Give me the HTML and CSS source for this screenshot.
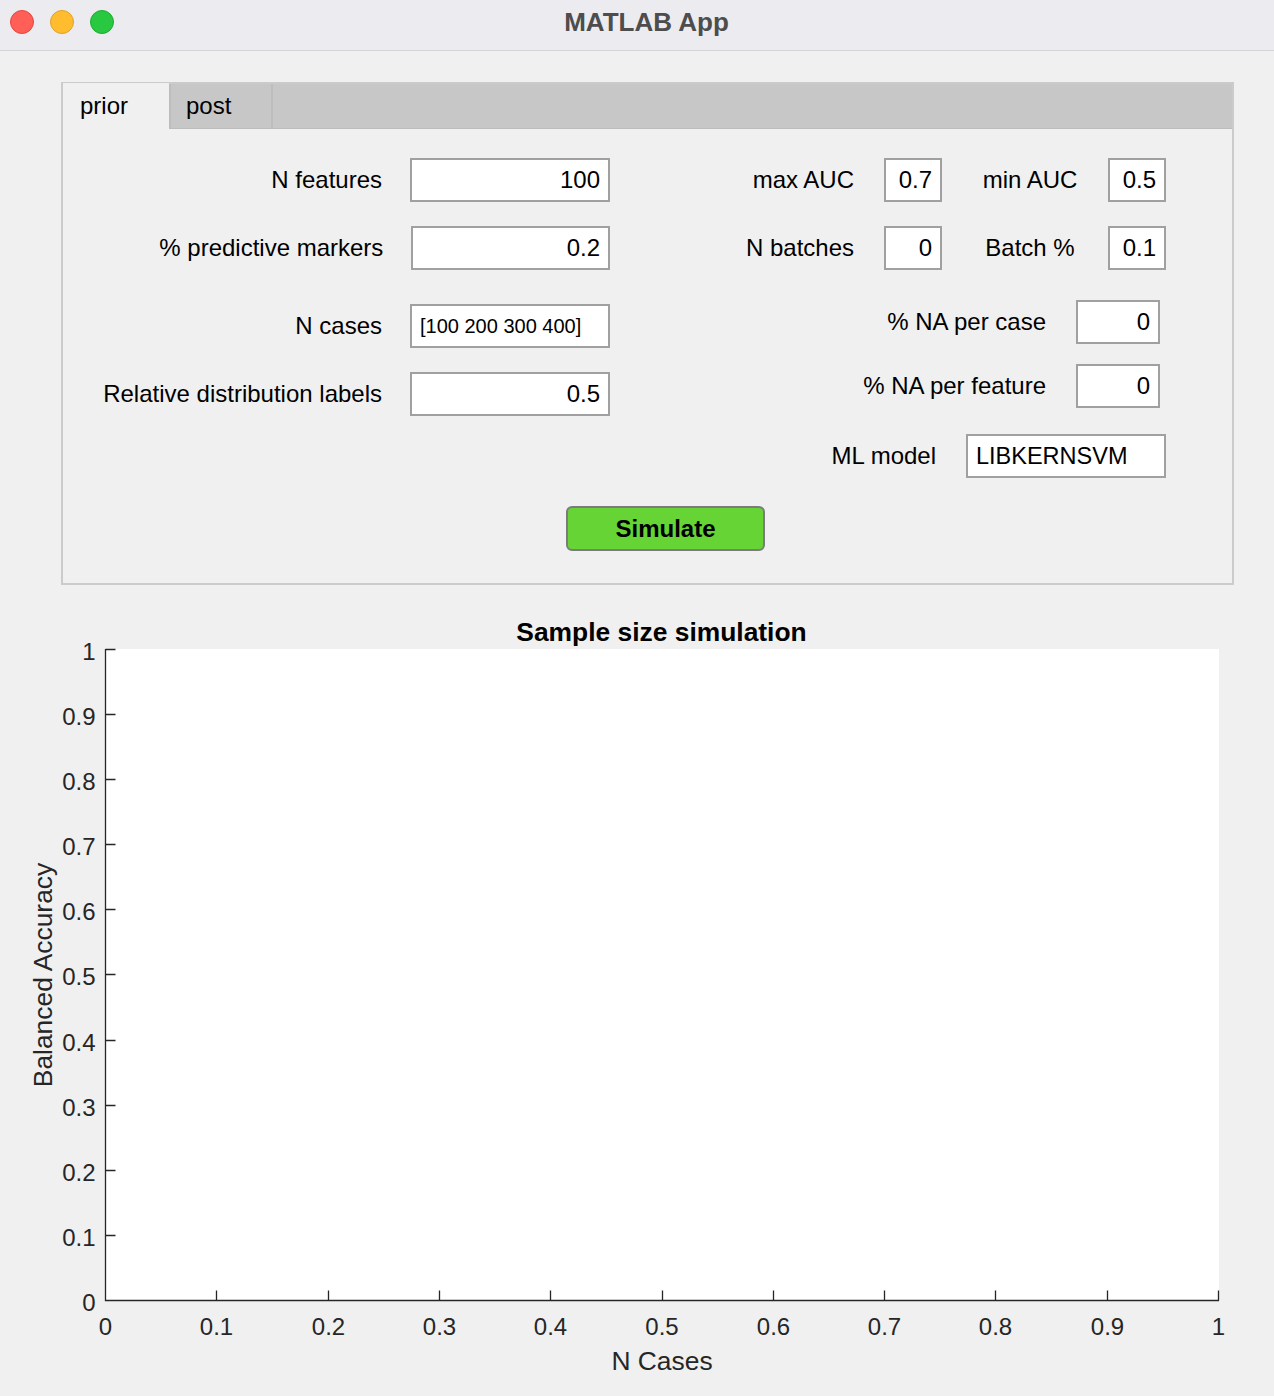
FILE: index.html
```html
<!DOCTYPE html>
<html lang="en">
<head>
<meta charset="utf-8">
<title>MATLAB App</title>
<link rel="stylesheet" href="styles.css">
</head>
<body>
<div class="window">
  <header class="titlebar">
    <div class="lights">
      <span class="light light-close"></span>
      <span class="light light-min"></span>
      <span class="light light-max"></span>
    </div>
    <div class="title">MATLAB App</div>
    <div class="titlebar-spacer"></div>
  </header>

  <main class="content">
    <section class="tabgroup">
      <nav class="tabbar">
        <div class="tab tab-active">prior</div>
        <div class="tab tab-inactive">post</div>
      </nav>
      <div class="tabbody">
        <div class="form">
          <div class="col col-left">
            <div class="field">
              <span class="lbl lbl-left">N features</span>
              <div class="edit w200 num">100</div>
            </div>
            <div class="field field-shift mt24">
              <span class="lbl lbl-left">% predictive markers</span>
              <div class="edit w199 num">0.2</div>
            </div>
            <div class="field mt34">
              <span class="lbl lbl-left">N cases</span>
              <div class="edit w200 txt small">[100 200 300 400]</div>
            </div>
            <div class="field mt24">
              <span class="lbl lbl-left">Relative distribution labels</span>
              <div class="edit w200 num">0.5</div>
            </div>
          </div>

          <div class="col col-right">
            <div class="field">
              <span class="lbl lbl-auc">max AUC</span>
              <div class="edit w58 num">0.7</div>
              <span class="lbl lbl-mid">min AUC</span>
              <div class="edit w58 num">0.5</div>
            </div>
            <div class="field mt24">
              <span class="lbl lbl-auc">N batches</span>
              <div class="edit w58 num">0</div>
              <span class="lbl lbl-mid">Batch %</span>
              <div class="edit w58 num">0.1</div>
            </div>
            <div class="field mt30">
              <span class="lbl lbl-na">% NA per case</span>
              <div class="edit w84 num">0</div>
            </div>
            <div class="field mt20">
              <span class="lbl lbl-na">% NA per feature</span>
              <div class="edit w84 num">0</div>
            </div>
            <div class="field mt26">
              <span class="lbl lbl-ml">ML model</span>
              <div class="edit w200 txt model">LIBKERNSVM</div>
            </div>
          </div>
        </div>

        <div class="button-row">
          <button class="btn-simulate" type="button">Simulate</button>
        </div>
      </div>
    </section>

    <svg class="chart" viewBox="0 0 1274 811" width="1274" height="811">
      <text class="chart-title" x="661.5" y="56" text-anchor="middle">Sample size simulation</text>
      <rect class="plot-bg" x="105.5" y="64" width="1113.5" height="651.5"/>
      <path class="tick" d="M105.5 64.5h10M105.5 129.5h10M105.5 194.5h10M105.5 259.5h10M105.5 324.5h10M105.5 389.5h10M105.5 455.5h10M105.5 520.5h10M105.5 585.5h10M105.5 650.5h10"/>
      <path class="tick" d="M216.5 715.5v-10M328.5 715.5v-10M439.5 715.5v-10M550.5 715.5v-10M662.5 715.5v-10M773.5 715.5v-10M884.5 715.5v-10M995.5 715.5v-10M1107.5 715.5v-10M1218.5 715.5v-10"/>
      <path class="axis" d="M105.5 64V715.5H1219"/>

      <g class="ylabels">
        <text class="tick-label" x="95.5" y="74.5" text-anchor="end">1</text>
        <text class="tick-label" x="95.5" y="139.5" text-anchor="end">0.9</text>
        <text class="tick-label" x="95.5" y="204.5" text-anchor="end">0.8</text>
        <text class="tick-label" x="95.5" y="269.5" text-anchor="end">0.7</text>
        <text class="tick-label" x="95.5" y="334.5" text-anchor="end">0.6</text>
        <text class="tick-label" x="95.5" y="399.5" text-anchor="end">0.5</text>
        <text class="tick-label" x="95.5" y="465.5" text-anchor="end">0.4</text>
        <text class="tick-label" x="95.5" y="530.5" text-anchor="end">0.3</text>
        <text class="tick-label" x="95.5" y="595.5" text-anchor="end">0.2</text>
        <text class="tick-label" x="95.5" y="660.5" text-anchor="end">0.1</text>
        <text class="tick-label" x="95.5" y="725.5" text-anchor="end">0</text>
      </g>

      <g class="xlabels">
        <text class="tick-label" x="105.5" y="750" text-anchor="middle">0</text>
        <text class="tick-label" x="216.5" y="750" text-anchor="middle">0.1</text>
        <text class="tick-label" x="328.5" y="750" text-anchor="middle">0.2</text>
        <text class="tick-label" x="439.5" y="750" text-anchor="middle">0.3</text>
        <text class="tick-label" x="550.5" y="750" text-anchor="middle">0.4</text>
        <text class="tick-label" x="662" y="750" text-anchor="middle">0.5</text>
        <text class="tick-label" x="773.5" y="750" text-anchor="middle">0.6</text>
        <text class="tick-label" x="884.5" y="750" text-anchor="middle">0.7</text>
        <text class="tick-label" x="995.5" y="750" text-anchor="middle">0.8</text>
        <text class="tick-label" x="1107.5" y="750" text-anchor="middle">0.9</text>
        <text class="tick-label" x="1218.5" y="750" text-anchor="middle">1</text>
      </g>

      <text class="axis-label" x="662" y="784.5" text-anchor="middle">N Cases</text>
      <text class="axis-label" transform="translate(52 390) rotate(-90)" text-anchor="middle">Balanced Accuracy</text>
    </svg>
  </main>
</div>
</body>
</html>
```

FILE: styles.css
```css
* {
  box-sizing: border-box;
}

html, body {
  margin: 0;
  padding: 0;
}

body {
  background: #f0f0f0;
  font-family: "Liberation Sans", Arial, Helvetica, sans-serif;
  color: #000;
  width: 1274px;
  height: 1396px;
  overflow: hidden;
}

.window {
  width: 1274px;
  height: 1396px;
  background: #f0f0f0;
}

/* ---------- title bar ---------- */
.titlebar {
  height: 51px;
  background: #ecebf0;
  border-bottom: 1px solid #d3d3d5;
  display: grid;
  grid-template-columns: 1fr auto 1fr;
  align-items: start;
}

.lights {
  display: flex;
  gap: 16px;
  padding: 10px 0 0 10px;
}

.light {
  width: 24px;
  height: 24px;
  border-radius: 50%;
  display: block;
}

.light-close {
  background: #ff5f57;
  border: 1px solid #e2463f;
}

.light-min {
  background: #febc2e;
  border: 1px solid #e0a228;
}

.light-max {
  background: #28c840;
  border: 1px solid #1eab32;
}

.title {
  padding-top: 7px;
  margin-left: 19px;
  font-size: 26px;
  font-weight: bold;
  color: #4d4d4d;
  line-height: normal;
}

/* ---------- tab group ---------- */
.content {
  padding-top: 31px;
}

.tabgroup {
  margin-left: 61px;
  width: 1173px;
  height: 503px;
  border: 2px solid #cbcbcb;
  background: #f0f0f0;
}

.tabbar {
  display: flex;
  height: 45px;
  background: #c7c7c7;
  border-bottom: 1px solid #bcbcbc;
}

.tab {
  font-size: 24px;
  line-height: normal;
  display: flex;
  align-items: center;
}

.tab-active {
  width: 106px;
  padding-left: 17px;
  background: #f0f0f0;
  margin-top: -1px;
  margin-bottom: -1px;
  position: relative;
}

.tab-inactive {
  width: 104px;
  padding-left: 15px;
  border-left: 2px solid #bdbdbd;
  border-right: 2px solid #bdbdbd;
  padding-bottom: 1px;
}

.tabbody {
  height: 454px;
  padding: 29px 0 32px;
}

/* ---------- form ---------- */
.form {
  display: flex;
  height: 320px;
}

.col {
  display: flex;
  flex-direction: column;
}

.col-left {
  width: 547px;
}

.col-right {
  flex: 1;
}

.field {
  display: flex;
  align-items: center;
  height: 44px;
}

.field-shift {
  margin-left: 2px;
}

.mt20 { margin-top: 20px; }
.mt24 { margin-top: 24px; }
.mt26 { margin-top: 26px; }
.mt30 { margin-top: 30px; }
.mt34 { margin-top: 34px; }

.lbl {
  font-size: 24px;
  line-height: normal;
  white-space: nowrap;
  color: #000;
}

.lbl-left {
  width: 319px;
  margin-right: 28px;
  text-align: right;
}

.lbl-auc {
  width: 244px;
  margin-right: 30px;
  text-align: right;
}

.lbl-mid {
  width: 166px;
  padding-left: 10px;
  text-align: center;
}

.lbl-na {
  width: 436px;
  margin-right: 30px;
  text-align: right;
}

.lbl-ml {
  width: 326px;
  margin-right: 30px;
  text-align: right;
}

.edit {
  height: 44px;
  background: #fff;
  border: 2px solid #a0a0a0;
  display: flex;
  align-items: center;
  padding: 0 8px;
  font-size: 24px;
  line-height: normal;
  white-space: nowrap;
  color: #000;
}

.num {
  justify-content: flex-end;
}

.txt {
  justify-content: flex-start;
}

.small {
  font-size: 20px;
}

.model {
  font-size: 23.5px;
}

.w58 { width: 58px; }
.w84 { width: 84px; }
.w199 { width: 199px; }
.w200 { width: 200px; }

/* ---------- button ---------- */
.button-row {
  margin-top: 28px;
  display: flex;
}

.btn-simulate {
  margin-left: 503px;
  width: 199px;
  height: 45px;
  background: #65d434;
  border: 2px solid #7b7b7b;
  border-radius: 6px;
  font-family: "Liberation Sans", Arial, Helvetica, sans-serif;
  font-size: 24px;
  font-weight: bold;
  color: #000;
  padding: 0;
}

/* ---------- chart ---------- */
.chart {
  display: block;
}

.plot-bg {
  fill: #fff;
}

.axis {
  fill: none;
  stroke: #262626;
  stroke-width: 1.3;
}

.tick {
  fill: none;
  stroke: #262626;
  stroke-width: 1.3;
}

.tick-label {
  font-family: "Liberation Sans", Arial, Helvetica, sans-serif;
  font-size: 24px;
  fill: #262626;
}

.chart-title {
  font-family: "Liberation Sans", Arial, Helvetica, sans-serif;
  font-size: 26.4px;
  font-weight: bold;
  fill: #000;
}

.axis-label {
  font-family: "Liberation Sans", Arial, Helvetica, sans-serif;
  font-size: 26.4px;
  fill: #262626;
}
```
